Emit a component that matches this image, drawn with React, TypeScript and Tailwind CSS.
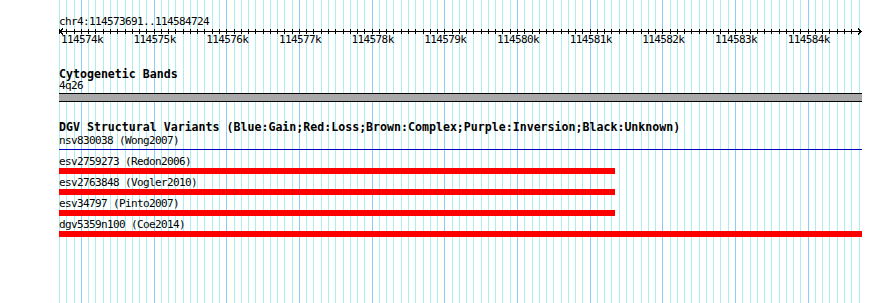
const START = 114573691;
const END = 114584724;
const LEFT = 59;
const PX_PER_BP = 0.07267;

const xOf = (bp: number) => (bp - START) * PX_PER_BP;

const minorTicks: number[] = [];
for (let bp = 114573700; bp <= END; bp += 100) minorTicks.push(bp);

const majorTicks: number[] = [];
for (let bp = 114574000; bp <= END; bp += 1000) majorTicks.push(bp);

const variants = [
  { label: 'esv2759273 (Redon2006)', width: 556 },
  { label: 'esv2763848 (Vogler2010)', width: 556 },
  { label: 'esv34797 (Pinto2007)', width: 556 },
  { label: 'dgv5359n100 (Coe2014)', width: 803 },
];

function Grid() {
  return (
    <svg className="absolute inset-0 pointer-events-none" width={890} height={303}>
      {minorTicks.map((bp) => {
        const major = bp % 1000 === 0;
        return (
          <rect
            key={bp}
            x={Math.floor(LEFT + xOf(bp))}
            y={0}
            width={1}
            height={303}
            fill={major ? '#87cefa' : '#afeeee'}
          />
        );
      })}
    </svg>
  );
}

function Ruler() {
  return (
    <div className="relative h-[20px] w-[803px]">
      <svg className="absolute left-0 top-0" width={803} height={7} shapeRendering="crispEdges">
        <rect x={1} y={3} width={801} height={1} fill="#000" />
        {minorTicks.map((bp) => (
          <rect key={bp} x={Math.floor(xOf(bp))} y={1} width={1} height={5} fill="#000" />
        ))}
        <polyline points="4,0.5 1,3.5 4,6.5" fill="none" stroke="#000" strokeWidth={1} />
        <polyline points="799,0.5 802,3.5 799,6.5" fill="none" stroke="#000" strokeWidth={1} />
      </svg>
      {majorTicks.map((bp) => (
        <span
          key={bp}
          className="absolute top-[5px] leading-[13px] -translate-x-1/2 whitespace-nowrap"
          style={{ left: xOf(bp) + 0.5 }}
        >
          {Math.round(bp / 1000)}k
        </span>
      ))}
    </div>
  );
}

export default function App() {
  return (
    <div className="relative w-[890px] h-[303px] bg-white overflow-hidden text-black font-['DejaVu_Sans_Mono',monospace] text-[11px] tracking-[-0.62px]">
      <Grid />
      <div className="relative flex flex-col pl-[59px] pt-[15px]">
        <div className="h-[13px] leading-[13px] whitespace-nowrap">chr4:114573691..114584724</div>
        <Ruler />

        <div className="mt-[22px] h-[9px] leading-[9px] font-bold text-[11.6px] tracking-[0px] whitespace-nowrap">
          Cytogenetic Bands
        </div>
        <div className="h-[13px] leading-[13px]">4q26</div>
        <div className="mt-[1px] h-[9px] w-[803px] border-y border-black bg-[#a9a9a9]" />

        <div className="mt-[19px] h-[13px] leading-[13px] font-bold text-[11.6px] tracking-[0px] whitespace-nowrap">
          DGV Structural Variants (Blue:Gain;Red:Loss;Brown:Complex;Purple:Inversion;Black:Unknown)
        </div>
        <div className="h-[13px] leading-[13px] whitespace-nowrap">nsv830038 (Wong2007)</div>
        <div className="mt-[2px] h-px w-[803px] bg-[#0000c0]" />

        <div className="mt-[5px] flex flex-col">
          {variants.map((v) => (
            <div key={v.label} className="flex flex-col mb-[2px]">
              <div className="h-[13px] leading-[13px] whitespace-nowrap">{v.label}</div>
              <div className="h-[6px] bg-[#ff0000]" style={{ width: v.width }} />
            </div>
          ))}
        </div>
      </div>
    </div>
  );
}
